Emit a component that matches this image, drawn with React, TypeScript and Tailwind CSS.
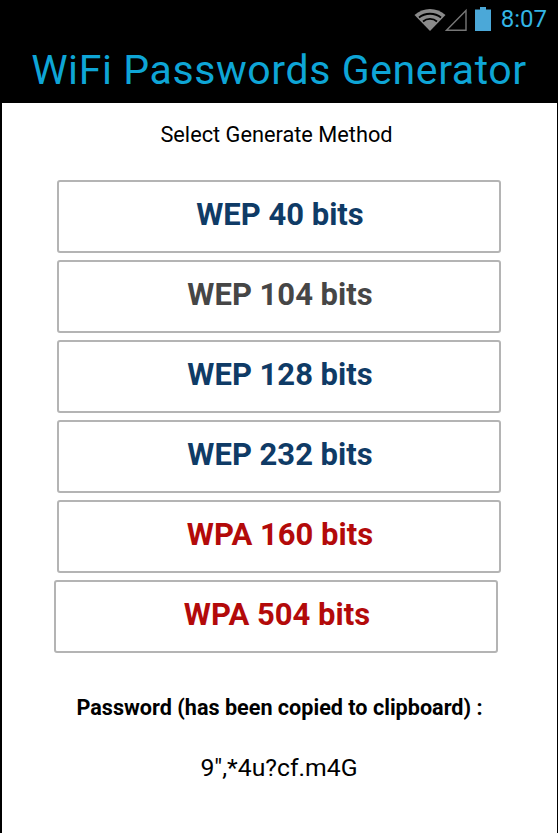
import React from 'react';

const methods = [
  { label: 'WEP 40 bits', color: 'text-[#0f3b66]' },
  { label: 'WEP 104 bits', color: 'text-[#464646]' },
  { label: 'WEP 128 bits', color: 'text-[#0f3b66]' },
  { label: 'WEP 232 bits', color: 'text-[#0f3b66]' },
  { label: 'WPA 160 bits', color: 'text-[#b30a0a]' },
];

const App: React.FC = () => {
  return (
    <div className="w-[558px] h-[833px] bg-black flex flex-col overflow-hidden font-['Roboto',sans-serif]">
      {/* status bar */}
      <div className="h-[38px] flex items-center justify-end pr-[11px]">
        <svg width="32" height="24" viewBox="0 0 32 24" className="mr-[-1px]">
          <path d="M0.5 8 C9 0 23 0 31.5 8 L16 24 Z" fill="#8a8a8a" />
          <path d="M5 10.5 C11 5.5 21 5.5 27 10.5 M9 14.5 C13 11 19 11 23 14.5" stroke="#000" strokeWidth="1.8" fill="none" />
        </svg>
        <svg width="22" height="24" viewBox="0 0 22 24" className="mr-[8px]">
          <path d="M21 3.5 V23.3 H1.5 Z" fill="none" stroke="#777" strokeWidth="1.4" />
        </svg>
        <svg width="16" height="24" viewBox="0 0 16 24" className="mr-[10px]">
          <path d="M5 0 H11 V2.5 H16 V24 H0 V2.5 H5 Z" fill="#4ba8d8" />
        </svg>
        <span className="text-[24px] leading-none text-[#33b5e5]">8:07</span>
      </div>
      {/* title */}
      <div className="h-[65px] flex items-center justify-center">
        <h1 className="text-[41px] leading-none tracking-[0.6px] font-normal text-[#0ea5d6]">WiFi Passwords Generator</h1>
      </div>
      {/* content */}
      <div className="flex-1 ml-[2px] mr-[1px] bg-white flex flex-col">
        <p className="mt-[19px] ml-[-6px] text-center text-[21.75px] leading-[25px] text-black">Select Generate Method</p>
        <div className="mt-[33px] ml-[55px] flex flex-col gap-[7px]">
          {methods.map(m => (
            <button
              key={m.label}
              className={`w-[444px] h-[73px] pb-[2px] pl-[2px] bg-white border-2 border-[#b4b4b4] rounded-[3px] text-[31px] font-bold ${m.color}`}
            >
              {m.label}
            </button>
          ))}
          <button className="w-[444px] h-[73px] pb-[2px] pl-[2px] ml-[-3px] bg-white border-2 border-[#b4b4b4] rounded-[3px] text-[31px] font-bold text-[#b30a0a]">
            WPA 504 bits
          </button>
        </div>
        <p className="mt-[42px] ml-[-2px] pl-[2px] text-center text-[21.6px] leading-[25px] font-bold text-black">
          Password (has been copied to clipboard) :
        </p>
        <p className="mt-[33px] ml-[-1px] text-center text-[24.75px] leading-[30px] text-black">9",*4u?cf.m4G</p>
      </div>
    </div>
  );
};

export default App;
